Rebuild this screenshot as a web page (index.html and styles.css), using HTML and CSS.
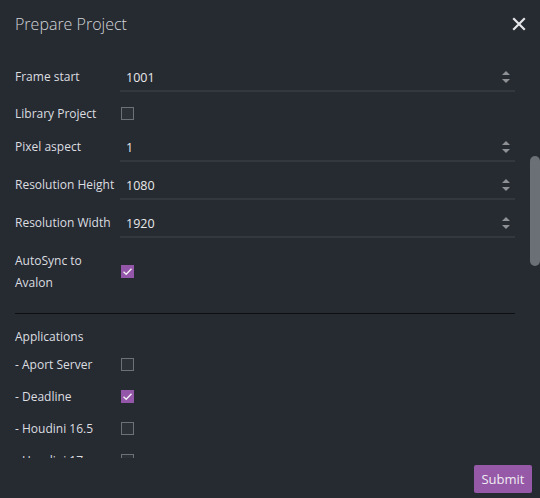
FILE: index.html
```html
<!DOCTYPE html>
<html>
<head>
<meta charset="utf-8">
<link rel="stylesheet" href="styles.css">
</head>
<body>
<div class="dialog">
  <header class="header">
    <h1 class="title">Prepare Project</h1>
    <button class="close" aria-label="Close">
      <svg width="14" height="14" viewBox="0 0 14 14"><path d="M2 2 L12 12 M12 2 L2 12" stroke="#e4e6e8" stroke-width="2.2" stroke-linecap="square"/></svg>
    </button>
  </header>
  <div class="scroll">
    <div class="form">
      <div class="row input-row">
        <span class="label">Frame start</span>
        <div class="field"><span class="value">1001</span><span class="spin"><i class="up"></i><i class="down"></i></span></div>
      </div>
      <div class="row check-row lib">
        <span class="label">Library Project</span>
        <span class="box"></span>
      </div>
      <div class="row input-row">
        <span class="label">Pixel aspect</span>
        <div class="field"><span class="value">1</span><span class="spin"><i class="up"></i><i class="down"></i></span></div>
      </div>
      <div class="row input-row">
        <span class="label">Resolution Height</span>
        <div class="field"><span class="value">1080</span><span class="spin"><i class="up"></i><i class="down"></i></span></div>
      </div>
      <div class="row input-row">
        <span class="label">Resolution Width</span>
        <div class="field"><span class="value">1920</span><span class="spin"><i class="up"></i><i class="down"></i></span></div>
      </div>
      <div class="row check-row sync">
        <span class="label two">AutoSync to<br>Avalon</span>
        <span class="box checked"><svg width="13" height="13" viewBox="0 0 13 13"><path d="M2.5 6.8 L5.2 9.3 L10.5 3.8" fill="none" stroke="#f2eef4" stroke-width="1.4"/></svg></span>
      </div>
      <hr class="divider">
      <div class="section">Applications</div>
      <div class="row app-row">
        <span class="label">- Aport Server</span>
        <span class="box"></span>
      </div>
      <div class="row app-row">
        <span class="label">- Deadline</span>
        <span class="box checked"><svg width="13" height="13" viewBox="0 0 13 13"><path d="M2.5 6.8 L5.2 9.3 L10.5 3.8" fill="none" stroke="#f2eef4" stroke-width="1.4"/></svg></span>
      </div>
      <div class="row app-row">
        <span class="label">- Houdini 16.5</span>
        <span class="box"></span>
      </div>
      <div class="row app-row">
        <span class="label">- Houdini 17</span>
        <span class="box"></span>
      </div>
    </div>
    <div class="thumb"></div>
  </div>
  <footer class="footer">
    <button class="submit">Submit</button>
  </footer>
</div>
</body>
</html>
```
FILE: styles.css
```css
html, body {
  margin: 0;
  padding: 0;
  background: #262a31;
  width: 540px;
  height: 498px;
  overflow: hidden;
  font-family: "Open Sans", "Noto Sans", sans-serif;
}
.dialog {
  display: flex;
  flex-direction: column;
  height: 498px;
}
.header {
  display: flex;
  align-items: center;
  justify-content: space-between;
  height: 48px;
  padding: 0 14px 0 15px;
}
.title {
  margin: 0;
  font-size: 16px;
  font-weight: 300;
  color: #d2d5d8;
  line-height: 1;
  padding-bottom: 1px;
}
.close {
  background: none;
  border: 0;
  padding: 0;
  width: 14px;
  height: 14px;
  display: flex;
}
.scroll {
  position: relative;
  height: 410px;
  overflow: hidden;
}
.form {
  padding: 14px 25px 0 15px;
  display: flex;
  flex-direction: column;
}
.row {
  display: flex;
  align-items: center;
}
.label {
  width: 106px;
  flex: none;
  font-size: 12px;
  color: #dcdee0;
  white-space: nowrap;
}
.label.two {
  line-height: 22px;
}
.input-row {
  height: 30px;
  margin-bottom: 8px;
}
.input-row .label {
  padding-bottom: 1px;
}
.field {
  flex: 1;
  height: 28px;
  margin-left: -1px;
  border-bottom: 2px solid #33373e;
  display: flex;
  align-items: center;
  padding: 0 5px 0 6px;
}
.value {
  flex: 1;
  font-size: 12.5px;
  color: #e8e9ea;
  padding-top: 3px;
}
.spin {
  display: flex;
  flex-direction: column;
  gap: 4px;
  padding-top: 1px;
}
.spin i {
  display: block;
  width: 0;
  height: 0;
  border-left: 4.5px solid transparent;
  border-right: 4.5px solid transparent;
}
.spin .up { border-bottom: 4px solid #8e9195; }
.spin .down { border-top: 4px solid #8e9195; }
.box {
  width: 11px;
  height: 11px;
  border: 1px solid #6d7177;
  background: #2c3037;
  flex: none;
  display: flex;
}
.box.checked {
  width: 13px;
  height: 13px;
  border: 0;
  background: #9456a8;
}
.check-row.lib {
  height: 21px;
  margin-bottom: 8px;
  padding-top: 3px;
}
.check-row.sync {
  height: 49px;
  padding-top: 1px;
}
.divider {
  margin: 17px 0 0 0;
  border: 0;
  height: 1px;
  background: #0d0f12;
}
.section {
  font-size: 12px;
  color: #dcdee0;
  height: 22px;
  line-height: 22px;
  margin-top: 12px;
}
.app-row {
  height: 32px;
}
.thumb {
  position: absolute;
  right: 0;
  top: 108px;
  width: 10px;
  height: 110px;
  border-radius: 5px;
  background: #6b6f76;
}
.footer {
  flex: 1;
  display: flex;
  justify-content: flex-end;
  align-items: flex-start;
  padding: 7px 8px 0 0;
}
.submit {
  font-family: "Open Sans", "Noto Sans", sans-serif;
  font-size: 13px;
  color: #f1ecf3;
  background: #9559a7;
  border: 0;
  border-radius: 2px;
  width: 58px;
  height: 28px;
  padding: 0;
}
```
